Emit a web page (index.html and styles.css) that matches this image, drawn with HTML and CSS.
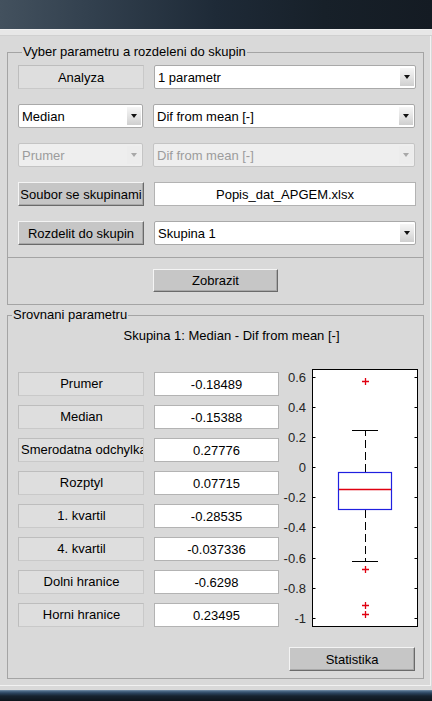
FILE: index.html
```html
<!DOCTYPE html>
<html>
<head>
<meta charset="utf-8">
<link rel="stylesheet" href="styles.css">
</head>
<body>
<div class="titlebar"></div>
<div class="topline"></div>
<div class="band"></div>
<div class="window">
  <fieldset class="panel p1">
    <legend>Vyber parametru a rozdeleni do skupin</legend>
    <div class="rows">
      <div class="row">
        <div class="btn flat">Analyza</div>
        <div class="popup wide"><span class="ptext">1 parametr</span><span class="arrow"></span></div>
      </div>
      <div class="row">
        <div class="popup narrow"><span class="ptext">Median</span><span class="arrow"></span></div>
        <div class="popup wide"><span class="ptext">Dif from mean [-]</span><span class="arrow"></span></div>
      </div>
      <div class="row">
        <div class="popup narrow disabled"><span class="ptext">Prumer</span><span class="arrow"></span></div>
        <div class="popup wide disabled"><span class="ptext">Dif from mean [-]</span><span class="arrow"></span></div>
      </div>
      <div class="row">
        <div class="btn raised">Soubor se skupinami</div>
        <div class="edit wide">Popis_dat_APGEM.xlsx</div>
      </div>
      <div class="row">
        <div class="btn raised">Rozdelit do skupin</div>
        <div class="popup wide"><span class="ptext">Skupina 1</span><span class="arrow"></span></div>
      </div>
    </div>
  </fieldset>
  <div class="zbox">
    <div class="btn raised zob">Zobrazit</div>
  </div>
  <fieldset class="panel p2">
    <legend>Srovnani parametru</legend>
    <div class="header">Skupina 1: Median - Dif from mean [-]</div>
    <div class="stats">
      <div class="grid">
        <div class="flat lbl">Prumer</div><div class="edit val">-0.18489</div>
        <div class="flat lbl">Median</div><div class="edit val">-0.15388</div>
        <div class="flat lbl">Smerodatna odchylka</div><div class="edit val">0.27776</div>
        <div class="flat lbl">Rozptyl</div><div class="edit val">0.07715</div>
        <div class="flat lbl">1. kvartil</div><div class="edit val">-0.28535</div>
        <div class="flat lbl">4. kvartil</div><div class="edit val">-0.037336</div>
        <div class="flat lbl">Dolni hranice</div><div class="edit val">-0.6298</div>
        <div class="flat lbl">Horni hranice</div><div class="edit val">0.23495</div>
      </div>
      <svg class="plot" width="140" height="266" viewBox="0 0 140 266">
        <rect x="30.5" y="4.5" width="105" height="257" fill="#fff" stroke="#000" stroke-width="1"/>
        <g stroke="#000" stroke-width="1">
          <path d="M30.5 12.5 h3 M135.5 12.5 h-3"/>
          <path d="M30.5 42.5 h3 M135.5 42.5 h-3"/>
          <path d="M30.5 72.5 h3 M135.5 72.5 h-3"/>
          <path d="M30.5 102.5 h3 M135.5 102.5 h-3"/>
          <path d="M30.5 132.5 h3 M135.5 132.5 h-3"/>
          <path d="M30.5 162.5 h3 M135.5 162.5 h-3"/>
          <path d="M30.5 193.5 h3 M135.5 193.5 h-3"/>
          <path d="M30.5 223.5 h3 M135.5 223.5 h-3"/>
          <path d="M30.5 253.5 h3 M135.5 253.5 h-3"/>
        </g>
        <g class="ticklbl" text-anchor="end">
          <text x="24" y="17">0.6</text>
          <text x="24" y="47">0.4</text>
          <text x="24" y="77">0.2</text>
          <text x="24" y="107">0</text>
          <text x="24" y="137">-0.2</text>
          <text x="24" y="167">-0.4</text>
          <text x="24" y="198">-0.6</text>
          <text x="24" y="228">-0.8</text>
          <text x="24" y="258">-1</text>
        </g>
        <g stroke="#000" stroke-width="1" fill="none">
          <path d="M83.5 107 V65.5" stroke-dasharray="8 4"/>
          <path d="M83.5 145 V196.5" stroke-dasharray="8 4"/>
          <path d="M70 65.5 H96 M70 196.5 H96"/>
        </g>
        <rect x="56.5" y="107.5" width="53" height="37" fill="none" stroke="#2020e0" stroke-width="1.2"/>
        <path d="M57 124.5 H109" stroke="#e00010" stroke-width="1.3"/>
        <g stroke="#e00010" stroke-width="1.3" fill="none">
          <path d="M80 16.5 h7 M83.5 13 v7"/>
          <path d="M80 204.5 h7 M83.5 201 v7"/>
          <path d="M80 240.5 h7 M83.5 237 v7"/>
          <path d="M80 249.5 h7 M83.5 246 v7"/>
        </g>
      </svg>
    </div>
    <div class="statrow">
      <div class="btn raised stat">Statistika</div>
    </div>
  </fieldset>
</div>
<div class="bottomgap"></div>
<div class="bottombar"></div>
</body>
</html>
```

FILE: styles.css
```css
* {
  box-sizing: border-box;
}

html, body {
  margin: 0;
  padding: 0;
}

body {
  width: 432px;
  height: 701px;
  overflow: hidden;
  background: #d9d9d9;
  font-family: "Liberation Sans", Arial, sans-serif;
  font-size: 13px;
  color: #000;
  display: flex;
  flex-direction: column;
}

.titlebar {
  height: 29px;
  flex: none;
  background: linear-gradient(90deg, #43515e 0%, #33414f 20%, #1e2a37 50%, #172029 75%, #141b23 100%);
}

.topline {
  height: 1px;
  flex: none;
  background: #f0f0f0;
}

.band {
  height: 6px;
  flex: none;
  background: #e7e7e7;
  border-bottom: 1px solid #d0d0d0;
}

.window {
  flex: none;
  height: 650px;
  border-bottom: 1px solid #f2f2f2;
  border-right: 1px solid #f2f2f2;
  width: 431px;
  padding-bottom: 6px;
}

.panel {
  margin: 0 6px 0 7px;
  border: 1px solid #a4a4a4;
  min-width: 0;
  padding: 0;
}

.panel legend {
  font-size: 13px;
  line-height: 14px;
  padding: 0 1px;
  margin-left: 4px;
  color: #000;
}

.p1 {
  margin-top: 9px;
  padding: 6px 9px 12px 10px;
}

.rows {
  display: flex;
  flex-direction: column;
  gap: 15px;
}

.row {
  display: flex;
  gap: 10px;
  height: 24px;
}

.btn {
  display: flex;
  align-items: center;
  justify-content: center;
  white-space: nowrap;
  overflow: hidden;
  height: 24px;
  width: 126px;
  flex: none;
}

.flat {
  background: #dedede;
  border: 1px solid #bdbdbd;
  border-right-color: #c9c9c9;
  border-bottom-color: #c9c9c9;
}

.raised {
  background: #c6c6c6;
  border: 1px solid;
  border-color: #f4f4f4 #6a6a6a #6a6a6a #f4f4f4;
  box-shadow: inset -1px -1px 0 #a8a8a8;
}

.popup {
  display: flex;
  align-items: stretch;
  height: 24px;
  background: #fff;
  border: 1px solid #a9a9a9;
  border-radius: 2px;
  flex: none;
}

.wide {
  width: 262px;
}

.narrow {
  width: 125px;
}

.ptext {
  flex: 1;
  display: flex;
  align-items: center;
  padding-left: 3px;
  white-space: nowrap;
  overflow: hidden;
}

.arrow {
  width: 14px;
  margin: 2px 1px 2px 0;
  background: linear-gradient(180deg, #f6f6f6 0%, #e4e4e4 50%, #cfcfcf 100%);
  display: flex;
  align-items: center;
  justify-content: center;
}

.arrow::after {
  content: "";
  width: 0;
  height: 0;
  border-left: 3.5px solid transparent;
  border-right: 3.5px solid transparent;
  border-top: 4px solid #111;
}

.disabled {
  background: #eeeeee;
  border-color: #c4c4c4;
  color: #9c9c9c;
}

.disabled .arrow {
  background: #ececec;
}

.disabled .arrow::after {
  border-top-color: #a8a8a8;
}

.edit {
  display: flex;
  align-items: center;
  justify-content: center;
  height: 24px;
  background: #fff;
  border: 1px solid #b3b3b3;
  white-space: nowrap;
  flex: none;
}

.zbox {
  margin: 0 6px 0 7px;
  border: 1px solid #a4a4a4;
  border-top: none;
  padding: 11px 0 12px;
  display: flex;
  justify-content: center;
}

.zob {
  width: 125px;
  height: 23px;
}

.p2 {
  margin-top: 3px;
  padding: 0 0 7px 0;
}

.header {
  margin-top: 6px;
  line-height: 15px;
  text-align: center;
  padding-left: 32px;
}

.stats {
  display: flex;
  margin-top: 22px;
  padding-left: 10px;
}

.grid {
  display: grid;
  grid-template-columns: 126px 125px;
  grid-auto-rows: 24px;
  column-gap: 10px;
  row-gap: 9px;
  margin-top: 7px;
  align-content: start;
}

.lbl {
  display: block;
  height: 24px;
  line-height: 22px;
  text-align: center;
  white-space: nowrap;
  overflow: hidden;
  padding: 0 1px 0 2px;
}

.plot {
  display: block;
  margin-left: 3px;
  flex: none;
}

.ticklbl {
  font-family: "Liberation Sans", Arial, sans-serif;
  font-size: 13px;
  fill: #262626;
}

.statrow {
  display: flex;
  justify-content: flex-end;
  margin-top: 16px;
  padding-right: 8px;
}

.stat {
  width: 126px;
}

.bottomgap {
  height: 4px;
  flex: none;
}

.bottombar {
  height: 11px;
  flex: none;
  background: linear-gradient(180deg, #7d95ad 0px, #4e6b88 1px, #2c4560 3px, #16222f 6px, #0d141b 100%);
}
```
